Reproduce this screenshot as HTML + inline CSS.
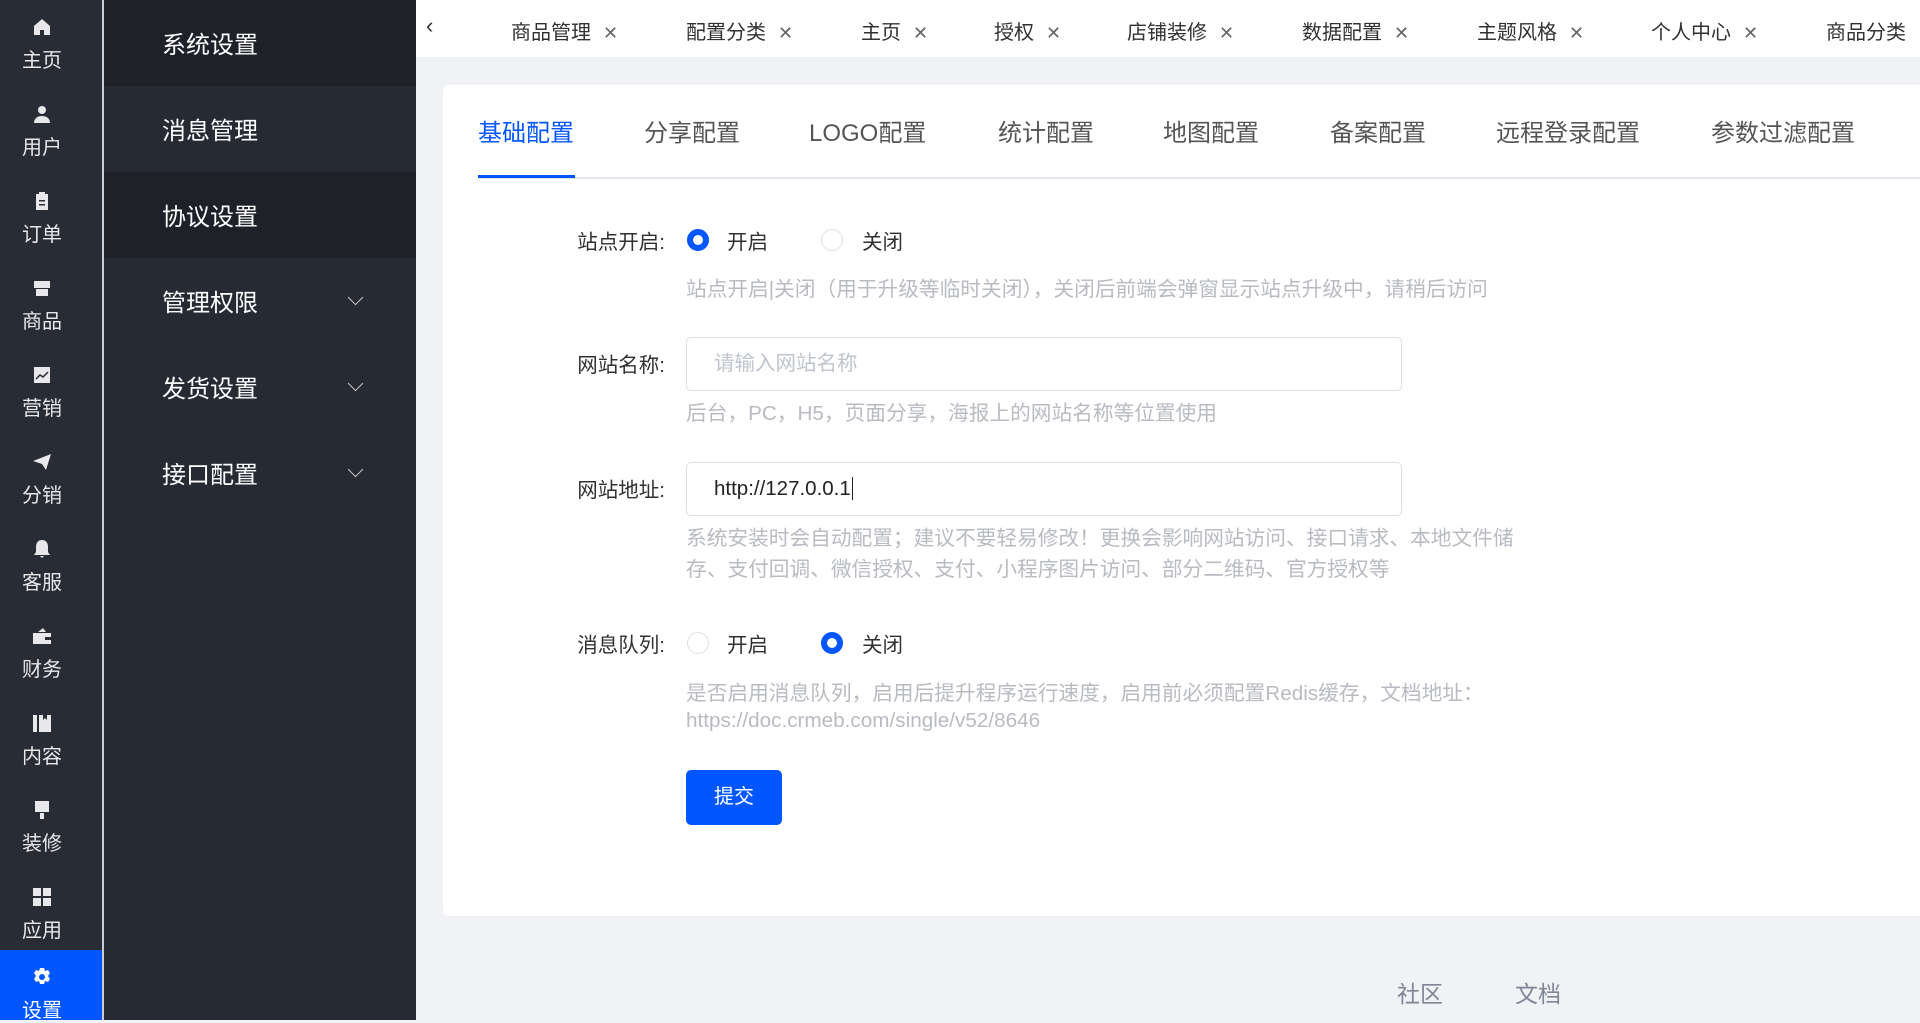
<!DOCTYPE html>
<html><head><meta charset="utf-8"><style>
*{margin:0;padding:0;box-sizing:border-box}
body{width:1920px;height:1020px;overflow:hidden;background:#f0f2f5;font-family:"Liberation Sans","Noto Sans CJK SC",sans-serif;position:relative}
.a{position:absolute;white-space:nowrap}
#s1{left:0;top:0;width:102px;height:1020px;background:#282c35}
#sep{left:102px;top:0;width:2px;height:1020px;background:#c9ccd2}
#s2{left:104px;top:0;width:312px;height:1020px;background:#262a33}
.it{position:absolute;left:0;width:84px;height:87px;color:#e8e8ea;text-align:center;font-size:20px}
.it svg{position:absolute;left:32px;top:17px;width:20px;height:20px;fill:#e8e8ea}
.it span{position:absolute;left:0;right:0;top:44px}
.m{position:absolute;left:0;width:312px;height:86px;color:#fff;font-size:24px;line-height:92px;padding-left:58px}
.m.d{background:#1e2128}
.m i{position:absolute;left:246px;top:34px;width:11px;height:11px;border-right:1.5px solid #ccc;border-bottom:1.5px solid #ccc;transform:rotate(45deg)}
#top{left:416px;top:0;width:1504px;height:57px;background:#fff}
.tb{position:absolute;top:16px;font-size:20px;color:#303133}
.tb b{font-weight:normal;color:#666;margin-left:12px;font-size:18px}
#card{left:443px;top:85px;width:1477px;height:831px;background:#fff;border-radius:6px 0 0 6px}
.t{position:absolute;top:113px;font-size:24px;color:#555}
.lb{position:absolute;font-size:20.5px;color:#303133;right:calc(1920px - 665px)}
.r{position:absolute;width:22px;height:22px;border-radius:50%;border:1px solid #dcdfe6;background:#fff}
.r.on{border:6px solid #0256ff;background:#fff}
.rt{position:absolute;font-size:20.5px;color:#303133}
.h{position:absolute;left:686px;font-size:20.7px;color:#b8bbc2}
.in{position:absolute;left:686px;width:716px;height:54px;border:1.5px solid #dcdfe6;border-radius:5px;font-size:20.5px;padding-left:27px;line-height:51px}
</style></head><body>
<div id="s1" class="a">
<div class="it" style="top:0"><svg viewBox="0 0 20 20"><path d="M10 2L2 9v9h6v-5h4v5h6V9z"/></svg><span>主页</span></div>
<div class="it" style="top:87px"><svg viewBox="0 0 20 20"><circle cx="10" cy="6" r="4"/><path d="M2 19c0-5 4-7 8-7s8 2 8 7z"/></svg><span>用户</span></div>
<div class="it" style="top:174px"><svg viewBox="0 0 20 20"><path d="M4 3h12v16H4z M7 1h6v3H7z"/><rect x="7" y="9" width="6" height="1.5" fill="#282c35"/><rect x="7" y="13" width="6" height="1.5" fill="#282c35"/></svg><span>订单</span></div>
<div class="it" style="top:261px"><svg viewBox="0 0 20 20"><path d="M2 3h16v7H2z M4 11h12v7H4z"/></svg><span>商品</span></div>
<div class="it" style="top:348px"><svg viewBox="0 0 20 20"><path d="M2 2h16v16H2z"/><path d="M4 14l4-4 3 2 5-5" stroke="#282c35" stroke-width="1.5" fill="none"/></svg><span>营销</span></div>
<div class="it" style="top:435px"><svg viewBox="0 0 20 20"><path d="M1 9L19 2 14 18 10 12z"/></svg><span>分销</span></div>
<div class="it" style="top:522px"><svg viewBox="0 0 20 20"><path d="M10 1c-4 0-6 3-6 7v5l-2 3h16l-2-3V8c0-4-2-7-6-7z M8 17h4l-2 2z"/></svg><span>客服</span></div>
<div class="it" style="top:609px"><svg viewBox="0 0 20 20"><path d="M1 7h18v11H1z M6 6l5-4 3 4z"/><rect x="13" y="11" width="6" height="3" fill="#282c35"/></svg><span>财务</span></div>
<div class="it" style="top:696px"><svg viewBox="0 0 20 20"><path d="M1 2h4v17H1z M7 2h12v17H7z"/><path d="M11 2v5l2-2 2 2V2z" fill="#282c35"/></svg><span>内容</span></div>
<div class="it" style="top:783px"><svg viewBox="0 0 20 20"><path d="M3 1h14v11H3z M8 13h4v6H8z"/></svg><span>装修</span></div>
<div class="it" style="top:870px"><svg viewBox="0 0 20 20"><path d="M1 1h8v8H1z M11 1h8v8h-8z M1 11h8v8H1z M11 11h8v8h-8z"/></svg><span>应用</span></div>
<div class="it" style="top:950px;height:70px;width:102px;background:#0256ff;color:#fff"><svg viewBox="0 0 20 20" style="fill:#fff"><path d="M8 1h4l1 3 3-1 2 3-2 3 2 3-2 3-3-1-1 3H8l-1-3-3 1-2-3 2-3-2-3 2-3 3 1z"/><circle cx="10" cy="10" r="3" fill="#0256ff"/></svg><span style="width:84px">设置</span></div>
</div>
<div id="sep" class="a"></div>
<div id="s2" class="a">
<div class="m d" style="top:0">系统设置</div>
<div class="m" style="top:86px">消息管理</div>
<div class="m d" style="top:172px">协议设置</div>
<div class="m" style="top:258px">管理权限<i></i></div>
<div class="m" style="top:344px">发货设置<i></i></div>
<div class="m" style="top:430px">接口配置<i></i></div>
</div>
<div id="top" class="a"></div>
<div class="a" style="left:426px;top:13px;font-size:22px;color:#333">&lsaquo;</div>
<div class="tb" style="left:511px">商品管理<b>✕</b></div>
<div class="tb" style="left:686px">配置分类<b>✕</b></div>
<div class="tb" style="left:861px">主页<b>✕</b></div>
<div class="tb" style="left:994px">授权<b>✕</b></div>
<div class="tb" style="left:1127px">店铺装修<b>✕</b></div>
<div class="tb" style="left:1302px">数据配置<b>✕</b></div>
<div class="tb" style="left:1477px">主题风格<b>✕</b></div>
<div class="tb" style="left:1651px">个人中心<b>✕</b></div>
<div class="tb" style="left:1826px">商品分类</div>
<div id="card" class="a"></div>
<div class="t" style="left:478px;color:#0256ff">基础配置</div>
<div class="t" style="left:644px">分享配置</div>
<div class="t" style="left:809px">LOGO配置</div>
<div class="t" style="left:998px">统计配置</div>
<div class="t" style="left:1163px">地图配置</div>
<div class="t" style="left:1330px">备案配置</div>
<div class="t" style="left:1496px">远程登录配置</div>
<div class="t" style="left:1711px">参数过滤配置</div>
<div class="a" style="left:478px;top:177px;width:1442px;height:1.5px;background:#e4e7ed"></div>
<div class="a" style="left:478px;top:175px;width:97px;height:3px;background:#0256ff"></div>

<div class="lb" style="top:225px">站点开启:</div>
<div class="r on" style="left:687px;top:229px"></div><div class="rt" style="left:727px;top:225px">开启</div>
<div class="r" style="left:821px;top:229px"></div><div class="rt" style="left:862px;top:225px">关闭</div>
<div class="h" style="top:272px">站点开启|关闭（用于升级等临时关闭），关闭后前端会弹窗显示站点升级中，请稍后访问</div>

<div class="lb" style="top:348px">网站名称:</div>
<div class="in" style="top:337px;color:#c0c4cc">请输入网站名称</div>
<div class="h" style="top:396px">后台，PC，H5，页面分享，海报上的网站名称等位置使用</div>

<div class="lb" style="top:473px">网站地址:</div>
<div class="in" style="top:462px;color:#222">http://127.0.0.1<span style="border-left:1.5px solid #222;margin-left:1px"></span></div>
<div class="h" style="top:521px">系统安装时会自动配置；建议不要轻易修改！更换会影响网站访问、接口请求、本地文件储</div>
<div class="h" style="top:552px">存、支付回调、微信授权、支付、小程序图片访问、部分二维码、官方授权等</div>

<div class="lb" style="top:628px">消息队列:</div>
<div class="r" style="left:687px;top:632px"></div><div class="rt" style="left:727px;top:628px">开启</div>
<div class="r on" style="left:821px;top:632px"></div><div class="rt" style="left:862px;top:628px">关闭</div>
<div class="h" style="top:676px">是否启用消息队列，启用后提升程序运行速度，启用前必须配置Redis缓存，文档地址：</div>
<div class="h" style="top:709px">https://doc.crmeb.com/single/v52/8646</div>

<div class="a" style="left:686px;top:770px;width:96px;height:55px;background:#0256ff;border-radius:5px;color:#fff;font-size:20px;text-align:center;line-height:55px">提交</div>

<div class="a" style="left:1397px;top:975px;font-size:23px;color:#808695">社区</div>
<div class="a" style="left:1515px;top:975px;font-size:23px;color:#808695">文档</div>
</body></html>
